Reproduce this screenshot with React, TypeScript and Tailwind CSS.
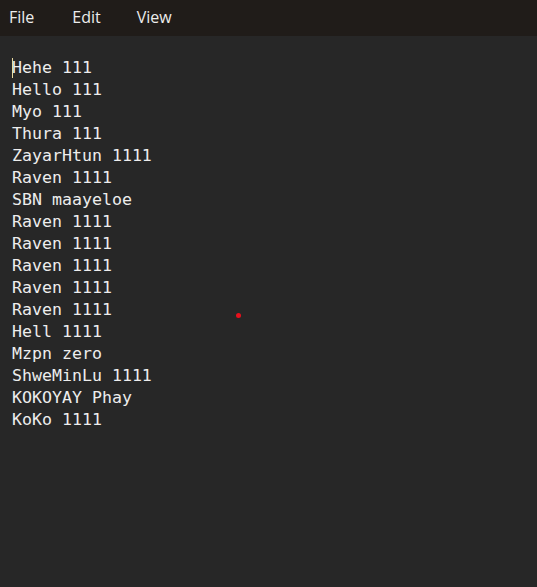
import React from 'react';

const lines = [
  'Hehe 111',
  'Hello 111',
  'Myo 111',
  'Thura 111',
  'ZayarHtun 1111',
  'Raven 1111',
  'SBN maayeloe',
  'Raven 1111',
  'Raven 1111',
  'Raven 1111',
  'Raven 1111',
  'Raven 1111',
  'Hell 1111',
  'Mzpn zero',
  'ShweMinLu 1111',
  'KOKOYAY Phay',
  'KoKo 1111',
];

export default function App() {
  return (
    <div className="w-[537px] h-[587px] bg-[#272727] flex flex-col overflow-hidden">
      <div className="h-[36px] bg-[#201c19] flex items-center text-[16px] text-[#ececec] font-['Open_Sans',sans-serif] shrink-0">
        <span className="ml-[9px] -mt-[2px]">File</span>
        <span className="ml-[38px] -mt-[2px]">Edit</span>
        <span className="ml-[36px] -mt-[2px]">View</span>
      </div>
      <div className="relative flex-1 pt-[21px] pl-[12px] font-['DejaVu_Sans_Mono',monospace] text-[16.6px] leading-[22px] text-[#ededed]">
        {lines.map((l, i) => (
          <div key={i} className="relative whitespace-pre">
            {i === 0 && <span className="absolute left-0 top-[1px] w-px h-[20px] bg-[#e8d9a0]" />}
            {l}
          </div>
        ))}
        <span className="absolute left-[236px] top-[277px] w-[5px] h-[5px] rounded-full bg-[#e8101c]" />
      </div>
    </div>
  );
}
